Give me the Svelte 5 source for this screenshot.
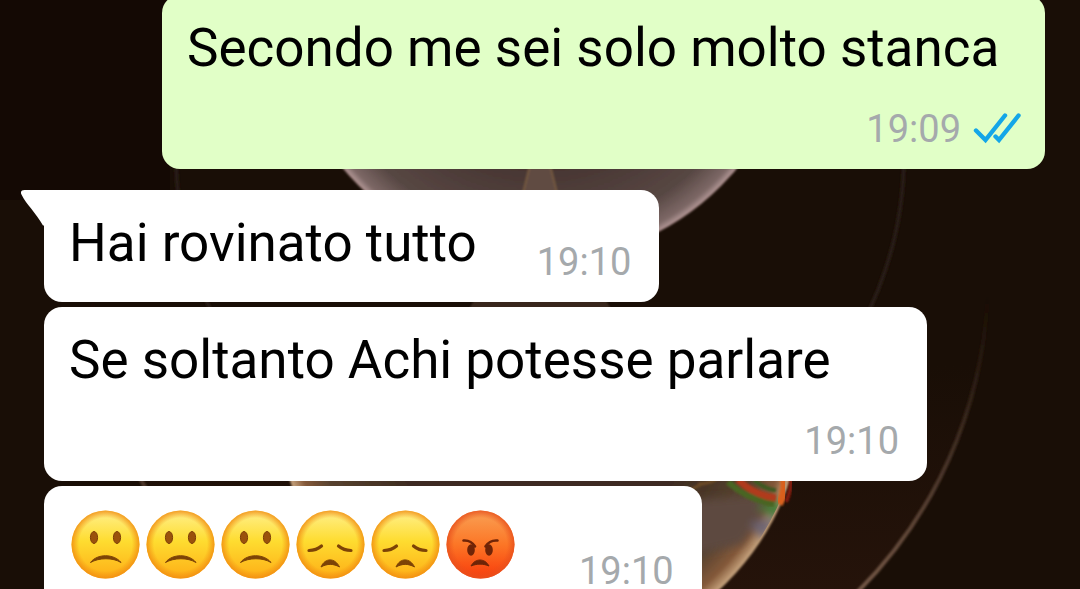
<script lang="ts">
	type Face = 'sad' | 'down' | 'angry';
	type Message = {
		mine?: boolean;
		tail?: boolean;
		read?: boolean;
		text?: string;
		faces?: Face[];
		time: string;
	};

	const messages: Message[] = [
		{ mine: true, read: true, text: 'Secondo me sei solo molto stanca', time: '19:09' },
		{ tail: true, text: 'Hai rovinato tutto', time: '19:10' },
		{ text: 'Se soltanto Achi potesse parlare', time: '19:10' },
		{ faces: ['sad', 'sad', 'sad', 'down', 'down', 'angry'], time: '19:10' }
	];

	const labels: Record<Face, string> = {
		sad: 'Slightly frowning face',
		down: 'Disappointed face',
		angry: 'Angry face'
	};
</script>

<main>
	<svg class="wallpaper" viewBox="0 0 1080 589" preserveAspectRatio="xMidYMin slice" aria-hidden="true">
		<defs>
			<radialGradient id="pink" gradientUnits="userSpaceOnUse" cx="540" cy="5" r="256">
				<stop offset="0.6" stop-color="#463330" />
				<stop offset="0.88" stop-color="#574743" />
				<stop offset="0.97" stop-color="#7d6866" />
				<stop offset="1" stop-color="#b79c9b" />
			</radialGradient>
			<radialGradient id="amber" gradientUnits="userSpaceOnUse" cx="540" cy="396" r="264">
				<stop offset="0.6" stop-color="#3e2c21" />
				<stop offset="0.86" stop-color="#57422f" />
				<stop offset="0.95" stop-color="#84593a" />
				<stop offset="1" stop-color="#c9a680" />
			</radialGradient>
			<linearGradient id="halo" x1="0" y1="0" x2="0" y2="1">
				<stop offset="0.6" stop-color="#25130a" stop-opacity="0" />
				<stop offset="0.85" stop-color="#25130a" />
			</linearGradient>
			<linearGradient id="arc" x1="0" y1="0" x2="0" y2="1">
				<stop offset="0.52" stop-color="#2c1c12" stop-opacity="0" />
				<stop offset="0.65" stop-color="#35241a" />
				<stop offset="0.85" stop-color="#735746" />
			</linearGradient>
			<filter id="soft"><feGaussianBlur stdDeviation="4" /></filter>
			<filter id="fine"><feGaussianBlur stdDeviation="1" /></filter>
			<clipPath id="lower"><path d="M270 400h540v240H270z" /></clipPath>
			<clipPath id="disc"><circle cx="540" cy="396" r="262" /></clipPath>
		</defs>
		<rect width="1080" height="589" fill="#190e06" />
		<rect width="170" height="200" fill="#140904" />
		<circle cx="540" cy="276" r="449" fill="url(#halo)" />
		<circle cx="540" cy="276" r="448" fill="none" stroke="url(#arc)" stroke-width="4" filter="url(#fine)" />
		<circle cx="540" cy="155" r="364" fill="none" stroke="#281b13" stroke-width="4" filter="url(#fine)" />
		<circle cx="540" cy="5" r="255" fill="url(#pink)" stroke="#a98c8b" stroke-width="2" filter="url(#fine)" />
		<path d="M530 165h20l7 28h-34z" fill="#604c42" stroke="#75593f" stroke-width="2" filter="url(#fine)" />
		<path d="M480 290h120l14 24H466z" fill="#38271c" filter="url(#fine)" />
		<g clip-path="url(#lower)">
			<circle cx="540" cy="396" r="264" fill="url(#amber)" filter="url(#fine)" />
			<g clip-path="url(#disc)">
				<g filter="url(#soft)">
					<path d="M696 500l80-6-34 50-46 10z" fill="#5d4a3f" />
					<path d="M750 524l28-8-16 24z" fill="#6b6375" />
					<path d="M756 506l28-6-6 20z" fill="#3f7c36" />
				</g>
				<g filter="url(#fine)" fill="none">
					<path d="M728 482Q748 500 774 504" stroke="#4a6524" stroke-width="6" />
					<path d="M738 480Q756 496 776 498" stroke="#b03a1a" stroke-width="7" />
					<path d="M754 480Q766 490 776 490" stroke="#3e5a22" stroke-width="4" />
					<path d="M698 484q12 0 20-6M690 490l12-6" stroke="#6d4c26" stroke-width="3" />
				</g>
			</g>
			<path d="M784 478q2 14-5 26" stroke="#d9601f" stroke-width="8" fill="none" filter="url(#fine)" />
			<path d="M791 478q1 10-5 24" stroke="#851c0c" stroke-width="4" fill="none" filter="url(#fine)" />
			<path d="M292 483h12M322 483h20" stroke="#9b3b35" stroke-width="8" filter="url(#fine)" />
			<path d="M304 483h16M342 483h12" stroke="#52552a" stroke-width="8" filter="url(#fine)" />
		</g>
	</svg>

	<ol class="messages">
		{#each messages as msg}
			<li class="bubble" class:mine={msg.mine} class:tailed={msg.tail}>
				{#if msg.tail}
					<svg class="tail" viewBox="0 0 24 36" aria-hidden="true">
						<path d="M24 0H3.500C0 0-.8 2.200 .6 4.800C5 14 15 23 22 35.500h2z" fill="#fff" />
					</svg>
				{/if}
				{#if msg.faces}
					<p class="faces">
						{#each msg.faces as face}
							<svg class="face" viewBox="0 0 75 75" role="img" aria-label={labels[face]}>
								<defs>
									<linearGradient id="face-{face}" x1="0" y1="0" x2="0" y2="1">
										{#if face === 'angry'}
											<stop offset="0" stop-color="#f9a155" />
											<stop offset="0.5" stop-color="#fc7626" />
											<stop offset="1" stop-color="#f83b0b" />
										{:else}
											<stop offset="0" stop-color="#fff08c" />
											<stop offset="0.45" stop-color="#fedc30" />
											<stop offset="1" stop-color="#feae16" />
										{/if}
									</linearGradient>
									<radialGradient id="rim-{face}">
										<stop offset="0.78" stop-color={face === 'angry' ? '#e8501c' : '#f18d12'} stop-opacity="0" />
										<stop offset="1" stop-color={face === 'angry' ? '#e8501c' : '#f18d12'} stop-opacity="0.85" />
									</radialGradient>
								</defs>
								<circle cx="36.500" cy="36.500" r="34" fill="url(#face-{face})" />
								<circle cx="36.500" cy="36.500" r="34" fill="url(#rim-{face})" />
								{#if face === 'sad'}
									<g fill="#9a520c" stroke="#7d3f08" stroke-width="1">
										<ellipse cx="25" cy="29.500" rx="3.600" ry="6" />
										<ellipse cx="48" cy="29.500" rx="3.600" ry="6" />
									</g>
									<path d="M21.500 54.500C28 45.500 45 45.500 52 54.500C44 49.500 30 49.500 21.500 54.500z" fill="#7d4306" stroke="#7d4306" stroke-linejoin="round" />
								{:else if face === 'down'}
									<g fill="none" stroke="#7d4306" stroke-width="3.200" stroke-linecap="round">
										<path d="M15 42.500C20 42.500 24 41 27.500 38" />
										<path d="M57 42.500C52 42.500 48 41 44.500 38" />
									</g>
									<path d="M27 59C31 49.500 41 49.500 45.500 59C39.500 55.500 33 55.500 27 59z" fill="#7d4306" stroke="#7d4306" stroke-linejoin="round" />
								{:else}
									<g fill="#6f2407">
										<ellipse cx="27" cy="42" rx="3.800" ry="5.800" />
										<ellipse cx="45" cy="42" rx="3.800" ry="5.800" />
										<path d="M27 58C31 50 41 50 45 58C39 55.500 33 55.500 27 58z" stroke="#6f2407" stroke-linejoin="round" />
									</g>
									<g fill="none" stroke="#6f2407" stroke-width="2.600" stroke-linecap="round">
										<path d="M19.500 32.500C25 32 28.500 34.500 31 38.500" />
										<path d="M53.500 32.500C48 32 44 34.500 41.500 38.500" />
									</g>
								{/if}
							</svg>
						{/each}
					</p>
				{:else}
					<p class="text">{msg.text}</p>
				{/if}
				<span class="meta">
					<time>{msg.time}</time>
					{#if msg.read}
						<svg class="ticks" viewBox="0 0 48 32" role="img" aria-label="Read">
							<g fill="none" stroke="#14a6e8" stroke-width="4.400" stroke-linecap="round">
								<path d="M3 17.500L12.500 27L32 2.500" />
								<path d="M22.500 23.500L26 27L45.500 2.500" />
							</g>
						</svg>
					{/if}
				</span>
			</li>
		{/each}
	</ol>
</main>

<style>
	:global(body) {
		margin: 0;
		background: #190e06;
	}

	main {
		position: relative;
		height: 100vh;
		overflow: hidden;
		font-family: Roboto, 'Noto Sans', sans-serif;
	}

	.wallpaper {
		position: absolute;
		inset: 0;
		width: 100%;
		height: 100%;
	}

	/* the list is scrolled a little past the first message */
	.messages {
		position: relative;
		display: flex;
		flex-direction: column;
		align-items: flex-start;
		gap: 5px;
		margin: -5px 0 0;
		padding: 0 35px 0 44px;
		list-style: none;
	}

	.bubble {
		position: relative;
		box-sizing: border-box;
		display: flex;
		flex-wrap: wrap;
		justify-content: space-between;
		column-gap: 60px;
		max-width: calc(100% - 118px);
		padding: 22px 28px 18px 25px;
		border-radius: 18px;
		background: #fff;
	}

	.bubble.mine {
		align-self: flex-end;
		margin-bottom: 16px;
		padding-right: 24px;
		background: #e1ffc7;
	}

	.bubble.tailed {
		border-top-left-radius: 0;
	}

	.tail {
		position: absolute;
		top: 0;
		left: -23px;
		width: 24px;
		height: 36px;
	}

	.text {
		margin: 0;
		font-size: 53px;
		line-height: 62px;
		color: #000;
	}

	.faces {
		display: flex;
		margin: 0;
		padding-bottom: 10px;
	}

	.face {
		width: 75px;
		height: 75px;
	}

	.meta {
		display: flex;
		align-items: center;
		align-self: flex-end;
		gap: 12px;
		margin-left: auto;
		padding-top: 28px;
		font-size: 38px;
		line-height: 44px;
		color: #a5a9ac;
	}

	.ticks {
		width: 48px;
		height: 32px;
	}
</style>
